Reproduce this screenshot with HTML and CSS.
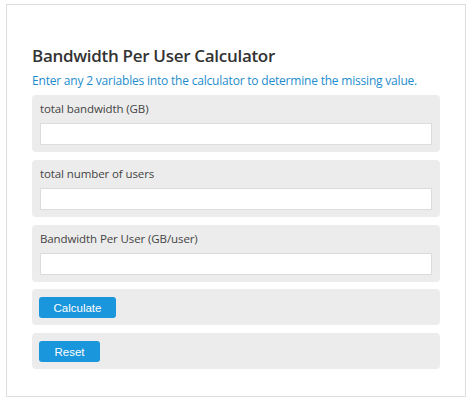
FILE: index.html
```html
<!DOCTYPE html>
<html lang="en">
<head>
  <meta charset="UTF-8">
  <title>Bandwidth Per User Calculator</title>
  <link rel="stylesheet" href="styles.css">
</head>
<body>

  <div class="calc-wrap">
    <h2 class="calc-title">Bandwidth Per User Calculator</h2>
    <p class="calc-intro">Enter any 2 variables into the calculator to determine the missing value.</p>

    <div class="field">
      <label for="totalBandwidth">total bandwidth (GB)</label>
      <input type="text" id="totalBandwidth">
    </div>

    <div class="field">
      <label for="totalUsers">total number of users</label>
      <input type="text" id="totalUsers">
    </div>

    <div class="field">
      <label for="perUser">Bandwidth Per User (GB/user)</label>
      <input type="text" id="perUser">
    </div>

    <div class="field field-btn">
      <button id="calcBtn">Calculate</button>
    </div>

    <div class="field field-btn">
      <button id="resetBtn">Reset</button>
    </div>
  </div>

</body>
</html>
```

FILE: styles.css
```css
body {
  margin: 0;
  background-color: #fff;
  font-family: "Open Sans", sans-serif;
  color: #333;
}

.calc-wrap {
  width: 408px;
  margin: 4px 0 0 6px;
  padding: 25px 25px 27px 25px;
  border: 1px solid #dedede;
}

.calc-title {
  margin: 14px 0 0 0;
  font-size: 17px;
  font-weight: 600;
  line-height: 24px;
  letter-spacing: -0.3px;
  color: #333;
}

.calc-intro {
  margin: 4px 0 5px 0;
  font-size: 12px;
  line-height: 18px;
  letter-spacing: -0.2px;
  white-space: nowrap;
  color: #1e8ccc;
}

.field {
  background-color: #ececec;
  border-radius: 4px;
  padding: 6px 8px 7px 8px;
  margin-bottom: 8px;
}

.field label {
  display: block;
  font-size: 11.5px;
  line-height: 16px;
  letter-spacing: -0.1px;
  color: #444;
  margin: 0 0 6px 0;
}

.field input {
  display: block;
  box-sizing: border-box;
  width: 100%;
  height: 22px;
  border: 1px solid #dcdcdc;
  background-color: #fff;
  margin: 0;
  padding: 0 4px;
}

.field-btn {
  padding: 8px 7px 7px 7px;
}

.field-btn:nth-child(6) {
  margin-top: -1px;
}

.field:last-child {
  margin-bottom: 0;
}

button {
  display: block;
  height: 21px;
  padding: 0;
  font-family: "Liberation Sans", Arial, sans-serif;
  font-size: 11.5px;
  color: #fff;
  background-color: #1a96dc;
  border: none;
  border-radius: 3px;
  cursor: pointer;
}

#calcBtn {
  width: 77px;
}

#resetBtn {
  width: 61px;
}
```
